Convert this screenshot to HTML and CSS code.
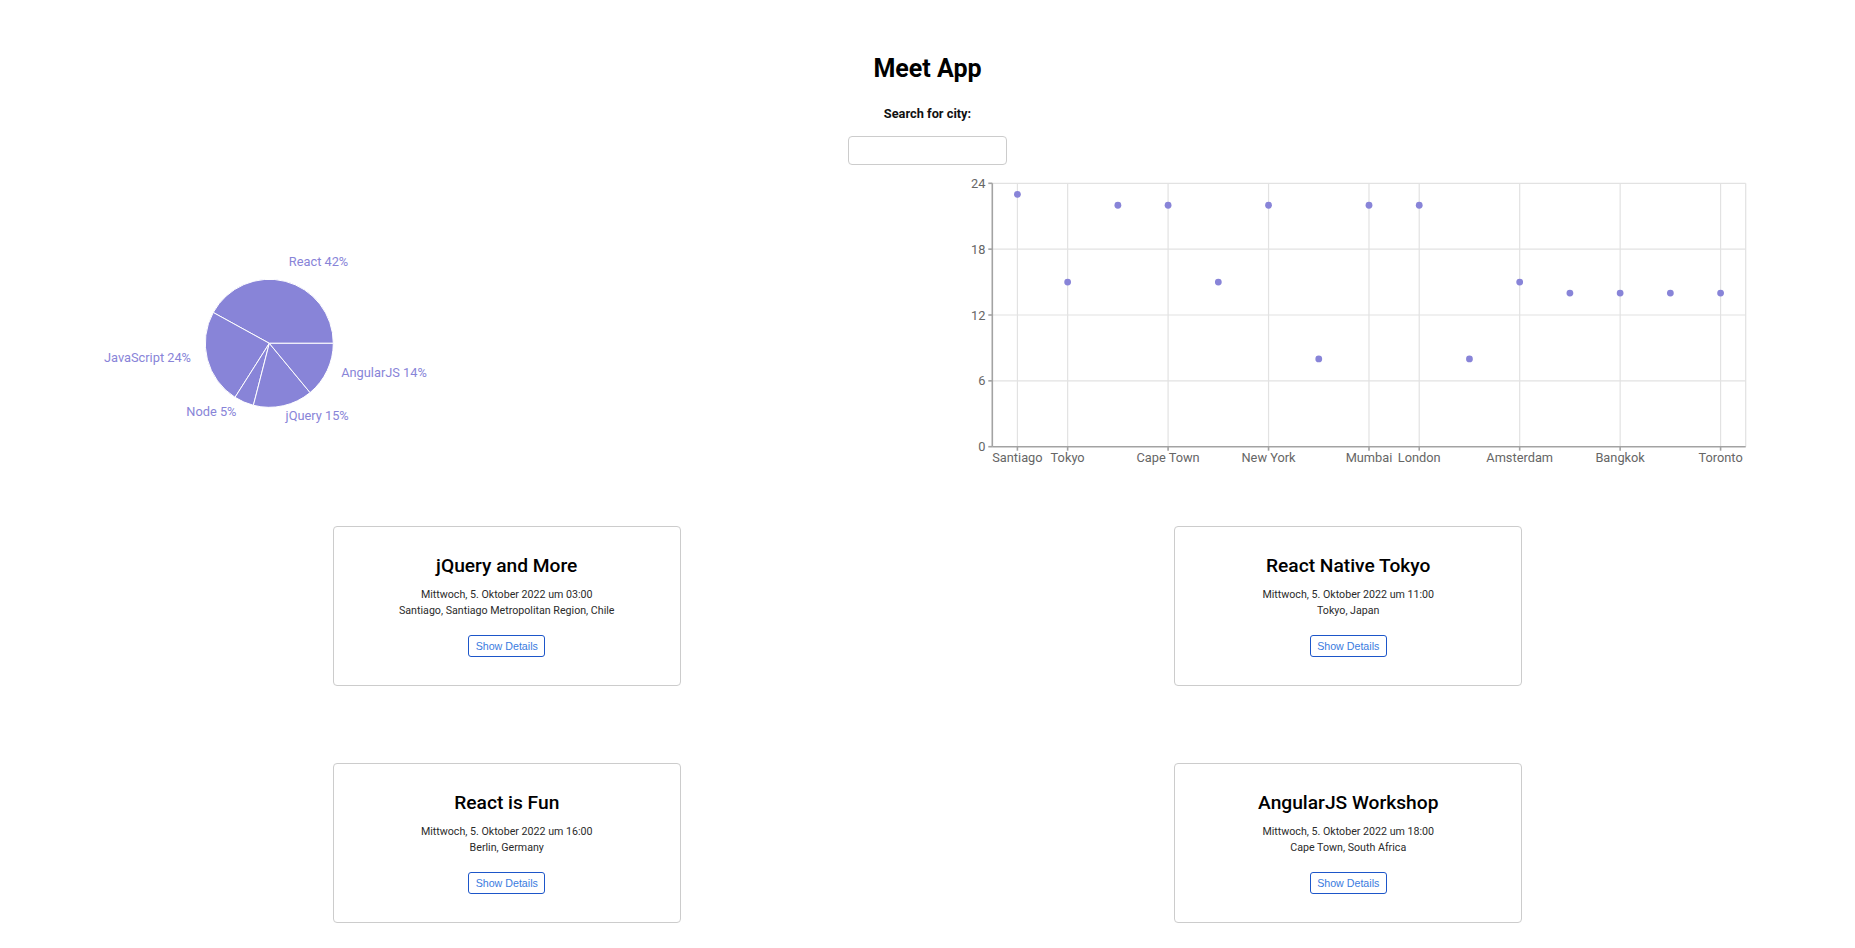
FILE: index.html
```html
<!DOCTYPE html>
<html lang="de">
<head>
<meta charset="utf-8">
<title>Meet App</title>
<link rel="stylesheet" href="styles.css">
</head>
<body>
<div class="app">
  <h1 class="app-title">Meet App</h1>
  <div class="city-search">
    <label class="search-label" for="city">Search for city:</label>
    <input class="search-input" id="city" type="text">
  </div>

  <div class="charts">
    <svg class="pie-chart" width="540" height="300" viewBox="0 0 540 300">
      <g class="slices" fill="#8884d8" stroke="#fff" stroke-width="1">
        <path d="M269.3 173.3 L333.3 173.3 A64 64 0 0 0 213.22 142.46 Z"/>
        <path d="M269.3 173.3 L213.22 142.46 A64 64 0 0 0 235.01 227.34 Z"/>
        <path d="M269.3 173.3 L235.01 227.34 A64 64 0 0 0 253.38 235.29 Z"/>
        <path d="M269.3 173.3 L253.38 235.29 A64 64 0 0 0 310.09 222.61 Z"/>
        <path d="M269.3 173.3 L310.09 222.61 A64 64 0 0 0 333.3 173.3 Z"/>
      </g>
      <g class="pie-labels">
        <text x="288.8" y="96">React 42%</text>
        <text x="191" y="192" text-anchor="end">JavaScript 24%</text>
        <text x="236.5" y="245.7" text-anchor="end">Node 5%</text>
        <text x="285.6" y="250">jQuery 15%</text>
        <text x="341.2" y="206.7">AngularJS 14%</text>
      </g>
    </svg>

    <svg class="scatter-chart" width="863" height="300" viewBox="0 0 863 300">
      <g class="grid" stroke="#e2e2e2" stroke-width="1.2">
        <line x1="80.3" y1="13.3" x2="833.7" y2="13.3"/>
        <line x1="80.3" y1="79.15" x2="833.7" y2="79.15"/>
        <line x1="80.3" y1="145" x2="833.7" y2="145"/>
        <line x1="80.3" y1="210.85" x2="833.7" y2="210.85"/>
        <line x1="105.41" y1="13.3" x2="105.41" y2="276.7"/>
        <line x1="155.64" y1="13.3" x2="155.64" y2="276.7"/>
        <line x1="256.09" y1="13.3" x2="256.09" y2="276.7"/>
        <line x1="356.55" y1="13.3" x2="356.55" y2="276.7"/>
        <line x1="457" y1="13.3" x2="457" y2="276.7"/>
        <line x1="507.23" y1="13.3" x2="507.23" y2="276.7"/>
        <line x1="607.68" y1="13.3" x2="607.68" y2="276.7"/>
        <line x1="708.14" y1="13.3" x2="708.14" y2="276.7"/>
        <line x1="808.59" y1="13.3" x2="808.59" y2="276.7"/>
        <line x1="833.7" y1="13.3" x2="833.7" y2="276.7"/>
      </g>
      <g class="axes" stroke="#a3a3a3" stroke-width="1.6">
        <line x1="80.3" y1="276.7" x2="833.7" y2="276.7"/>
        <line x1="80.3" y1="13.3" x2="80.3" y2="276.7"/>
        <line x1="76.3" y1="276.7" x2="80.3" y2="276.7"/>
        <line x1="76.3" y1="210.85" x2="80.3" y2="210.85"/>
        <line x1="76.3" y1="145" x2="80.3" y2="145"/>
        <line x1="76.3" y1="79.15" x2="80.3" y2="79.15"/>
        <line x1="76.3" y1="13.3" x2="80.3" y2="13.3"/>
        <line x1="105.41" y1="276.7" x2="105.41" y2="280.7"/>
        <line x1="155.64" y1="276.7" x2="155.64" y2="280.7"/>
        <line x1="256.09" y1="276.7" x2="256.09" y2="280.7"/>
        <line x1="356.55" y1="276.7" x2="356.55" y2="280.7"/>
        <line x1="457" y1="276.7" x2="457" y2="280.7"/>
        <line x1="507.23" y1="276.7" x2="507.23" y2="280.7"/>
        <line x1="607.68" y1="276.7" x2="607.68" y2="280.7"/>
        <line x1="708.14" y1="276.7" x2="708.14" y2="280.7"/>
        <line x1="808.59" y1="276.7" x2="808.59" y2="280.7"/>
      </g>
      <g class="tick-labels y-ticks" text-anchor="end">
        <text x="73.5" y="281.2">0</text>
        <text x="73.5" y="215.35">6</text>
        <text x="73.5" y="149.5">12</text>
        <text x="73.5" y="83.65">18</text>
        <text x="73.5" y="17.8">24</text>
      </g>
      <g class="tick-labels x-ticks" text-anchor="middle">
        <text x="105.41" y="291.6">Santiago</text>
        <text x="155.64" y="291.6">Tokyo</text>
        <text x="256.09" y="291.6">Cape Town</text>
        <text x="356.55" y="291.6">New York</text>
        <text x="457" y="291.6">Mumbai</text>
        <text x="507.23" y="291.6">London</text>
        <text x="607.68" y="291.6">Amsterdam</text>
        <text x="708.14" y="291.6">Bangkok</text>
        <text x="808.59" y="291.6">Toronto</text>
      </g>
      <g class="dots" fill="#8884d8">
        <circle cx="105.41" cy="24.28" r="3.4"/>
        <circle cx="155.64" cy="112.08" r="3.4"/>
        <circle cx="205.87" cy="35.25" r="3.4"/>
        <circle cx="256.09" cy="35.25" r="3.4"/>
        <circle cx="306.32" cy="112.08" r="3.4"/>
        <circle cx="356.55" cy="35.25" r="3.4"/>
        <circle cx="406.77" cy="188.9" r="3.4"/>
        <circle cx="457" cy="35.25" r="3.4"/>
        <circle cx="507.23" cy="35.25" r="3.4"/>
        <circle cx="557.45" cy="188.9" r="3.4"/>
        <circle cx="607.68" cy="112.08" r="3.4"/>
        <circle cx="657.91" cy="123.05" r="3.4"/>
        <circle cx="708.14" cy="123.05" r="3.4"/>
        <circle cx="758.36" cy="123.05" r="3.4"/>
        <circle cx="808.59" cy="123.05" r="3.4"/>
      </g>
    </svg>
  </div>

  <ul class="event-list">
    <li class="event">
      <h2 class="event-title">jQuery and More</h2>
      <div class="event-info">Mittwoch, 5. Oktober 2022 um 03:00</div>
      <div class="event-info">Santiago, Santiago Metropolitan Region, Chile</div>
      <button class="details-btn">Show Details</button>
    </li>
    <li class="event">
      <h2 class="event-title">React Native Tokyo</h2>
      <div class="event-info">Mittwoch, 5. Oktober 2022 um 11:00</div>
      <div class="event-info">Tokyo, Japan</div>
      <button class="details-btn">Show Details</button>
    </li>
    <li class="event">
      <h2 class="event-title">React is Fun</h2>
      <div class="event-info">Mittwoch, 5. Oktober 2022 um 16:00</div>
      <div class="event-info">Berlin, Germany</div>
      <button class="details-btn">Show Details</button>
    </li>
    <li class="event">
      <h2 class="event-title">AngularJS Workshop</h2>
      <div class="event-info">Mittwoch, 5. Oktober 2022 um 18:00</div>
      <div class="event-info">Cape Town, South Africa</div>
      <button class="details-btn">Show Details</button>
    </li>
  </ul>
</div>
</body>
</html>
```

FILE: styles.css
```css
html, body {
  margin: 0;
  padding: 0;
  background: #fff;
  overflow: hidden;
}

.app {
  font-family: Roboto, "Liberation Sans", sans-serif;
  color: #000;
  padding-top: 54.5px;
  height: 948px;
  box-sizing: border-box;
}

.app-title {
  margin: 0;
  text-align: center;
  font-size: 25px;
  line-height: 28px;
  font-weight: 700;
}

.city-search {
  display: flex;
  flex-direction: column;
  align-items: center;
  margin-top: 23px;
}

.search-label {
  font-size: 12.8px;
  line-height: 15px;
  font-weight: 700;
  color: #111;
}

.search-input {
  margin-top: 15.2px;
  width: 159px;
  height: 29.5px;
  box-sizing: border-box;
  border: 1px solid #ccc;
  border-radius: 4px;
  padding: 0 6px;
  font-family: Roboto, sans-serif;
  background: #fff;
}

.charts {
  display: flex;
  justify-content: space-between;
  align-items: flex-start;
  margin-top: 4.5px;
  padding-right: 80px;
}

.charts svg {
  display: block;
  flex: none;
}

.pie-labels text {
  font-family: Roboto, sans-serif;
  font-size: 12.8px;
  fill: #8884d8;
}

.tick-labels text {
  font-family: Roboto, sans-serif;
  font-size: 12.8px;
  fill: #666;
}

.event-list {
  list-style: none;
  margin: 56px auto 0;
  padding: 0;
  width: 1683px;
  display: grid;
  grid-template-columns: 1fr 1fr;
  row-gap: 77px;
  justify-items: center;
}

.event {
  width: 348px;
  height: 160px;
  box-sizing: border-box;
  border: 1px solid #ccc;
  border-radius: 4px;
  padding-top: 27.2px;
  display: flex;
  flex-direction: column;
  align-items: center;
}

.event-title {
  margin: 0;
  font-size: 19.2px;
  line-height: 23px;
  font-weight: 500;
  color: #000;
}

.event-info {
  font-size: 10.67px;
  line-height: 16.7px;
  color: #2b2b2b;
}

.event-title + .event-info {
  margin-top: 9.8px;
}

.details-btn {
  margin-top: 14.9px;
  font-family: "Liberation Sans", Arial, sans-serif;
  font-size: 10.67px;
  line-height: 12px;
  padding: 4px 6.5px;
  height: 22px;
  box-sizing: border-box;
  border: 1px solid #1d56c9;
  border-radius: 3px;
  background: #fff;
  color: #3b7be0;
  cursor: pointer;
}
```
